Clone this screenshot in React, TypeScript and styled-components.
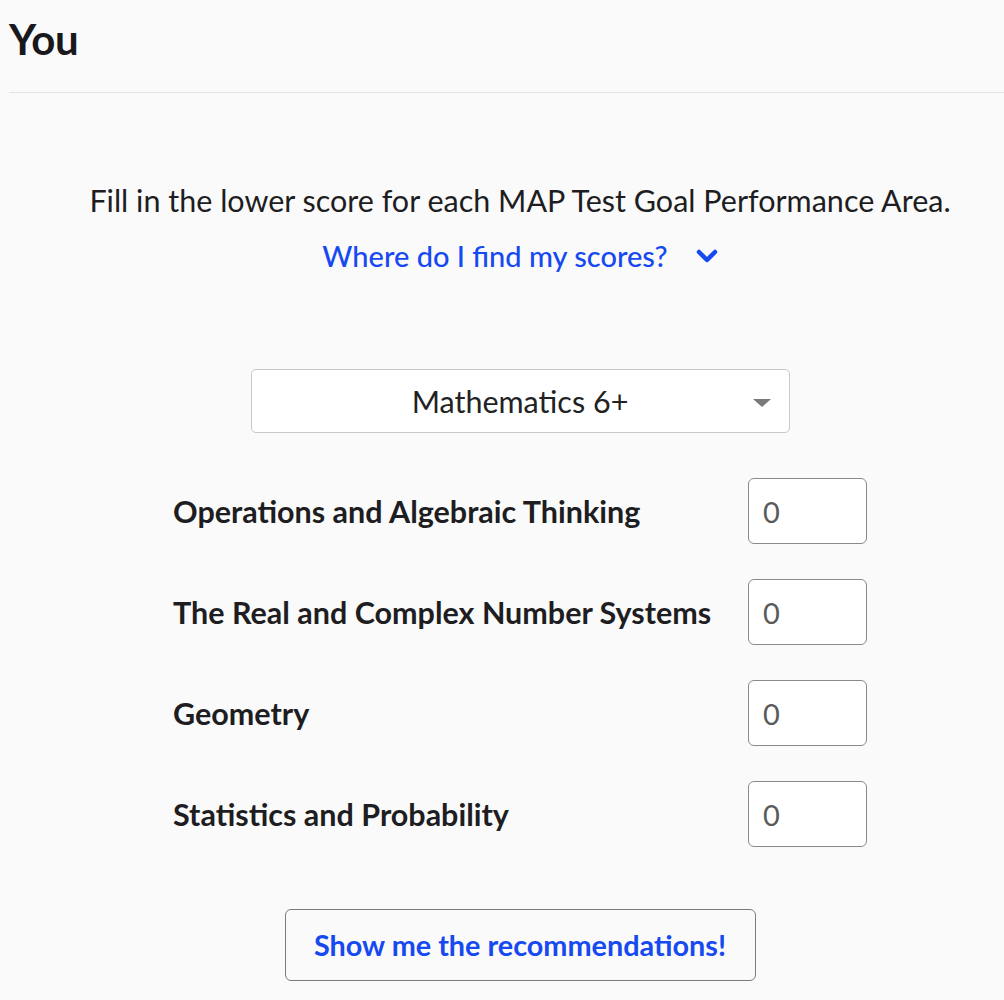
import React from "react";
import styled, { createGlobalStyle } from "styled-components";

const Global = createGlobalStyle`
  html, body { margin: 0; padding: 0; background: #fafafa; }
  body { font-family: Lato, "Open Sans", sans-serif; color: #1d1d22; }
  * { box-sizing: border-box; }
`;

const Page = styled.div`
  padding-left: 9px;
  min-height: 1000px;
  background: #fafafa;
`;

const Header = styled.header`
  height: 93px;
  border-bottom: 1px solid #e2e2e2;
  display: flex;
  align-items: flex-start;
`;

const Title = styled.h1`
  margin: 15px 0 0 0;
  font-family: Lato, sans-serif;
  font-weight: 700;
  font-size: 42px;
  line-height: 48px;
  color: #18181d;
  letter-spacing: -0.3px;
`;

const Main = styled.main`
  padding-left: 27px;
  display: flex;
  flex-direction: column;
  align-items: center;
`;

const Intro = styled.p`
  margin: 87px 0 0 0;
  font-size: 30.5px;
  line-height: 40px;
  color: #1d1d22;
  text-align: center;
  white-space: nowrap;
`;

const HelpLink = styled.button`
  margin-top: 18px;
  background: none;
  border: none;
  padding: 0;
  display: flex;
  align-items: center;
  gap: 28px;
  font-family: Lato, sans-serif;
  font-size: 29px;
  font-weight: 500;
  color: #1649f0;
  cursor: pointer;
  line-height: 36px;
`;

const SelectBox = styled.div`
  margin-top: 95px;
  width: 539px;
  height: 64px;
  border: 1px solid #c8c8c8;
  border-radius: 5px;
  background: #fff;
  position: relative;
  display: flex;
  align-items: center;
  justify-content: center;
  font-size: 30.5px;
  color: #222;
`;

const Caret = styled.span`
  position: absolute;
  right: 18px;
  top: 29px;
  width: 0;
  height: 0;
  border-left: 9px solid transparent;
  border-right: 9px solid transparent;
  border-top: 8px solid #7a7a7a;
`;

const Rows = styled.div`
  margin-top: 45px;
  width: 694px;
  display: flex;
  flex-direction: column;
  gap: 35px;
`;

const Row = styled.div`
  display: flex;
  align-items: center;
  justify-content: space-between;
`;

const Label = styled.label`
  font-weight: 700;
  font-size: 30.5px;
  color: #1d1d22;
  white-space: nowrap;
`;

const ScoreInput = styled.input`
  width: 119px;
  height: 66px;
  border: 1px solid #8a8a8a;
  border-radius: 6px;
  background: #fff;
  padding: 0 14px;
  font-family: Lato, sans-serif;
  font-size: 29px;
  color: #5a5a5a;
  outline: none;
`;

const SubmitButton = styled.button`
  margin-top: 62px;
  width: 471px;
  height: 72px;
  border: 1px solid #7c7c7c;
  border-radius: 6px;
  background: #fafafa;
  font-family: Lato, sans-serif;
  font-weight: 700;
  font-size: 28.8px;
  color: #1649f0;
  cursor: pointer;
`;

const areas = [
  "Operations and Algebraic Thinking",
  "The Real and Complex Number Systems",
  "Geometry",
  "Statistics and Probability",
];

const Chevron = () => (
  <svg width="22" height="14" viewBox="0 0 22 14" fill="none">
    <path d="M3 3 L11 11 L19 3" stroke="#1649f0" strokeWidth="4.5" strokeLinecap="round" strokeLinejoin="round" />
  </svg>
);

export default function App() {
  return (
    <Page>
      <Global />
      <Header>
        <Title>You</Title>
      </Header>
      <Main>
        <Intro>Fill in the lower score for each MAP Test Goal Performance Area.</Intro>
        <HelpLink type="button">
          Where do I find my scores?
          <Chevron />
        </HelpLink>
        <SelectBox>
          Mathematics 6+
          <Caret />
        </SelectBox>
        <Rows>
          {areas.map((a) => (
            <Row key={a}>
              <Label>{a}</Label>
              <ScoreInput defaultValue="0" />
            </Row>
          ))}
        </Rows>
        <SubmitButton type="button">Show me the recommendations!</SubmitButton>
      </Main>
    </Page>
  );
}
